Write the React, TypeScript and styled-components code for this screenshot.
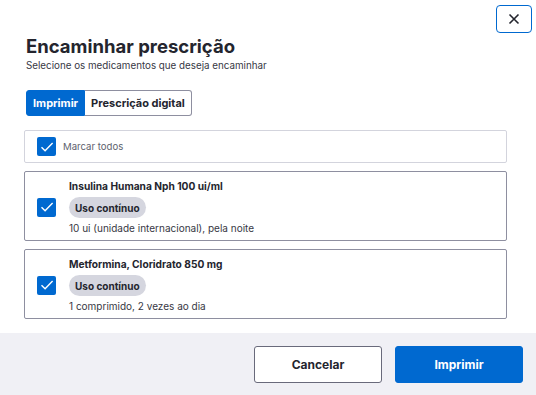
import React from "react";
import styled, { createGlobalStyle } from "styled-components";

const GlobalStyle = createGlobalStyle`
  html, body {
    margin: 0;
    padding: 0;
    background: #ffffff;
  }

  body {
    font-family: "Inter", "Noto Sans", "Liberation Sans", sans-serif;
    color: #24252e;
  }
`;

const Dialog = styled.div`
  position: relative;
  width: 536px;
  height: 395px;
  display: flex;
  flex-direction: column;
  background: #ffffff;
  overflow: hidden;
`;

const CloseButton = styled.button`
  position: absolute;
  top: 5px;
  right: 4px;
  width: 36px;
  height: 28px;
  display: flex;
  align-items: center;
  justify-content: center;
  padding: 0;
  background: #ffffff;
  border: 1.5px solid #0069d0;
  border-radius: 4px;
  color: #24252e;
  cursor: pointer;
`;

const Body = styled.div`
  flex: 1;
  padding: 34px 29px 0 24px;
`;

const Header = styled.div`
  padding-left: 2px;

  .title {
    margin: 0;
    font-size: 18.5px;
    font-weight: 700;
    line-height: 24px;
  }

  .subtitle {
    margin-top: 1px;
    font-size: 9.8px;
    line-height: 14px;
    color: #373844;
  }
`;

const Tabs = styled.div`
  display: inline-flex;
  margin: 17px 0 0 2px;
  height: 26px;
`;

const Tab = styled.button<{ $active?: boolean; $first?: boolean }>`
  padding: 0 6px;
  font-family: inherit;
  font-size: 11px;
  font-weight: 700;
  border: 1px solid ${(p) => (p.$active ? "#0069d0" : "#8e8fa0")};
  background: ${(p) => (p.$active ? "#0069d0" : "#ffffff")};
  color: ${(p) => (p.$active ? "#ffffff" : "#24252e")};
  border-radius: ${(p) => (p.$first ? "3px 0 0 3px" : "0 3px 3px 0")};
  ${(p) => (p.$first ? "" : "border-left: none;")}
`;

const List = styled.div`
  display: flex;
  flex-direction: column;
  gap: 8px;
  margin-top: 14px;
`;

const Card = styled.label<{ $light?: boolean }>`
  display: flex;
  align-items: center;
  gap: ${(p) => (p.$light ? "7px" : "13px")};
  padding: ${(p) => (p.$light ? "6px 12px" : "6px 12px 4px")};
  min-height: ${(p) => (p.$light ? "19px" : "58px")};
  border: 1px solid ${(p) => (p.$light ? "#d3d4dd" : "#8e8fa0")};
  border-radius: 2px;
`;

const Check = styled.span`
  flex: 0 0 19px;
  width: 19px;
  height: 19px;
  display: flex;
  align-items: center;
  justify-content: center;
  background: #0069d0;
  border-radius: 2px;
`;

const MarkAll = styled.span`
  font-size: 9.6px;
  color: #5e5f6e;
`;

const Info = styled.div`
  display: flex;
  flex-direction: column;
  align-items: flex-start;

  .name {
    font-size: 10.2px;
    font-weight: 700;
    line-height: 16px;
  }

  .desc {
    margin-top: 2px;
    font-size: 10px;
    line-height: 16px;
    color: #373844;
  }
`;

const Pill = styled.span`
  margin-top: 3px;
  height: 21px;
  display: inline-flex;
  align-items: center;
  padding: 0 6px;
  font-size: 10px;
  font-weight: 700;
  background: #d5d6df;
  border-radius: 11px;
  color: #24252e;
`;

const Footer = styled.div`
  height: 62px;
  display: flex;
  align-items: center;
  justify-content: flex-end;
  gap: 13px;
  padding: 0 13px;
  background: #f0f0f5;
`;

const FooterButton = styled.button<{ $primary?: boolean }>`
  width: 128px;
  height: 37px;
  font-family: inherit;
  font-size: 12px;
  font-weight: 700;
  border-radius: 3px;
  border: 1px solid ${(p) => (p.$primary ? "#0069d0" : "#696a7b")};
  background: ${(p) => (p.$primary ? "#0069d0" : "#ffffff")};
  color: ${(p) => (p.$primary ? "#ffffff" : "#24252e")};
`;

const CheckMark = () => (
  <svg width="14" height="14" viewBox="0 0 14 14" fill="none">
    <path d="M1.5 7.2l3.6 3.6L12.6 3" stroke="#ffffff" strokeWidth="1.4" />
  </svg>
);

const medicines = [
  {
    name: "Insulina Humana Nph 100 ui/ml",
    desc: "10 ui (unidade internacional), pela noite",
  },
  {
    name: "Metformina, Cloridrato 850 mg",
    desc: "1 comprimido, 2 vezes ao dia",
  },
];

export default function App() {
  return (
    <>
      <GlobalStyle />
      <Dialog>
        <CloseButton aria-label="Fechar">
          <svg width="12" height="12" viewBox="0 0 12 12">
            <path d="M1.5 1.5l9 9M10.5 1.5l-9 9" stroke="#24252e" strokeWidth="1.6" />
          </svg>
        </CloseButton>
        <Body>
          <Header>
            <h1 className="title">Encaminhar prescrição</h1>
            <div className="subtitle">Selecione os medicamentos que deseja encaminhar</div>
          </Header>
          <Tabs>
            <Tab $active $first>
              Imprimir
            </Tab>
            <Tab>Prescrição digital</Tab>
          </Tabs>
          <List>
            <Card $light>
              <Check>
                <CheckMark />
              </Check>
              <MarkAll>Marcar todos</MarkAll>
            </Card>
            {medicines.map((m) => (
              <Card key={m.name}>
                <Check>
                  <CheckMark />
                </Check>
                <Info>
                  <span className="name">{m.name}</span>
                  <Pill>Uso contínuo</Pill>
                  <span className="desc">{m.desc}</span>
                </Info>
              </Card>
            ))}
          </List>
        </Body>
        <Footer>
          <FooterButton>Cancelar</FooterButton>
          <FooterButton $primary>Imprimir</FooterButton>
        </Footer>
      </Dialog>
    </>
  );
}
